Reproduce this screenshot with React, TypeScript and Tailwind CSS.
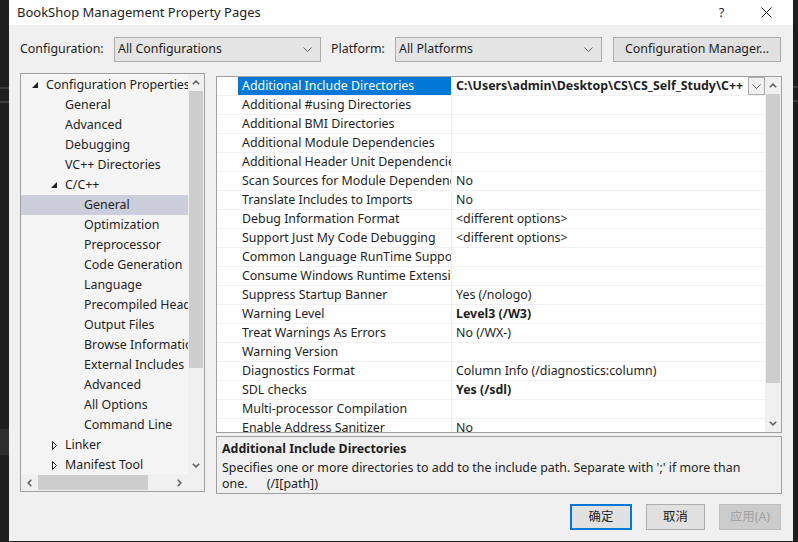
import React from 'react';

type Row = { name: string; value?: string; bold?: boolean };

const rows: Row[] = [
  { name: 'Additional Include Directories', value: 'C:\\Users\\admin\\Desktop\\CS\\CS_Self_Study\\C++', bold: true },
  { name: 'Additional #using Directories' },
  { name: 'Additional BMI Directories' },
  { name: 'Additional Module Dependencies' },
  { name: 'Additional Header Unit Dependencies' },
  { name: 'Scan Sources for Module Dependencies', value: 'No' },
  { name: 'Translate Includes to Imports', value: 'No' },
  { name: 'Debug Information Format', value: '<different options>' },
  { name: 'Support Just My Code Debugging', value: '<different options>' },
  { name: 'Common Language RunTime Support' },
  { name: 'Consume Windows Runtime Extension' },
  { name: 'Suppress Startup Banner', value: 'Yes (/nologo)' },
  { name: 'Warning Level', value: 'Level3 (/W3)', bold: true },
  { name: 'Treat Warnings As Errors', value: 'No (/WX-)' },
  { name: 'Warning Version' },
  { name: 'Diagnostics Format', value: 'Column Info (/diagnostics:column)' },
  { name: 'SDL checks', value: 'Yes (/sdl)', bold: true },
  { name: 'Multi-processor Compilation' },
  { name: 'Enable Address Sanitizer', value: 'No' },
];

type TreeItem = { label: string; level: number; toggle?: 'open' | 'closed'; selected?: boolean };

const tree: TreeItem[] = [
  { label: 'Configuration Properties', level: 0, toggle: 'open' },
  { label: 'General', level: 1 },
  { label: 'Advanced', level: 1 },
  { label: 'Debugging', level: 1 },
  { label: 'VC++ Directories', level: 1 },
  { label: 'C/C++', level: 1, toggle: 'open' },
  { label: 'General', level: 2, selected: true },
  { label: 'Optimization', level: 2 },
  { label: 'Preprocessor', level: 2 },
  { label: 'Code Generation', level: 2 },
  { label: 'Language', level: 2 },
  { label: 'Precompiled Headers', level: 2 },
  { label: 'Output Files', level: 2 },
  { label: 'Browse Information', level: 2 },
  { label: 'External Includes', level: 2 },
  { label: 'Advanced', level: 2 },
  { label: 'All Options', level: 2 },
  { label: 'Command Line', level: 2 },
  { label: 'Linker', level: 1, toggle: 'closed' },
  { label: 'Manifest Tool', level: 1, toggle: 'closed' },
];

function ChevronDown() {
  return (
    <svg width="9" height="5" viewBox="0 0 9 5">
      <path d="M0.5 0.5 L4.5 4.5 L8.5 0.5" fill="none" stroke="#606060" strokeWidth="1" />
    </svg>
  );
}

function ArrowUp() {
  return (
    <svg width="8" height="5" viewBox="0 0 8 5">
      <path d="M0.8 4.3 L4 1.2 L7.2 4.3" fill="none" stroke="#606060" strokeWidth="1.6" />
    </svg>
  );
}

function ArrowDown() {
  return (
    <svg width="8" height="5" viewBox="0 0 8 5">
      <path d="M0.8 0.7 L4 3.8 L7.2 0.7" fill="none" stroke="#606060" strokeWidth="1.6" />
    </svg>
  );
}

function ArrowLeft() {
  return (
    <svg width="5" height="8" viewBox="0 0 5 8">
      <path d="M4.3 0.8 L1.2 4 L4.3 7.2" fill="none" stroke="#606060" strokeWidth="1.6" />
    </svg>
  );
}

function ArrowRight() {
  return (
    <svg width="5" height="8" viewBox="0 0 5 8">
      <path d="M0.7 0.8 L3.8 4 L0.7 7.2" fill="none" stroke="#606060" strokeWidth="1.6" />
    </svg>
  );
}

function Toggle({ kind }: { kind: 'open' | 'closed' }) {
  if (kind === 'open') {
    return (
      <svg width="6" height="6" viewBox="0 0 6 6">
        <polygon points="6,0 6,6 0,6" fill="#1e1e1e" />
      </svg>
    );
  }
  return (
    <svg width="5" height="9" viewBox="0 0 5 9">
      <polygon points="0.5,0.5 4.5,4.5 0.5,8.5" fill="none" stroke="#1e1e1e" strokeWidth="1" />
    </svg>
  );
}

function Select({ label, width }: { label: string; width: string }) {
  return (
    <div className={`flex h-[25px] items-center justify-between border border-[#adadad] bg-[#e5e5e5] pl-[3px] pr-[8px] ${width}`}>
      <span>{label}</span>
      <ChevronDown />
    </div>
  );
}

function TreePanel() {
  return (
    <div className="flex h-[419px] w-[185px] flex-col border border-[#a0a0a0] bg-[#f5f5f5]">
      <div className="flex min-h-0 flex-1">
        <div className="flex-1 overflow-hidden pt-[1px]">
          {tree.map((t, i) => (
            <div
              key={i}
              className={`relative flex h-[20px] items-center whitespace-nowrap text-[#1e1e1e] ${t.selected ? 'bg-[#cccedb]' : ''}`}
            >
              <div
                className={`flex w-[16px] shrink-0 items-center justify-center ${
                  t.level === 0 ? 'ml-[6px]' : t.level === 1 ? 'ml-[25px]' : 'ml-[44px]'
                }`}
              >
                {t.toggle && <Toggle kind={t.toggle} />}
              </div>
              <span className="ml-[3px]">{t.label}</span>
            </div>
          ))}
        </div>
        <div className="flex w-[16px] shrink-0 flex-col bg-[#f0f0f0]">
          <div className="flex h-[17px] items-center justify-center">
            <ArrowUp />
          </div>
          <div className="flex-1 px-[1px]">
            <div className="h-[277px] bg-[#cdcdcd]" />
          </div>
          <div className="flex h-[17px] items-center justify-center">
            <ArrowDown />
          </div>
        </div>
      </div>
      <div className="flex h-[17px] shrink-0">
        <div className="flex flex-1 items-center bg-[#f0f0f0]">
          <div className="flex w-[17px] justify-center">
            <ArrowLeft />
          </div>
          <div className="h-[15px] w-[110px] bg-[#cdcdcd]" />
          <div className="flex-1" />
          <div className="flex w-[17px] justify-center">
            <ArrowRight />
          </div>
        </div>
        <div className="w-[16px] bg-[#f0f0f0]" />
      </div>
    </div>
  );
}

function PropertyGrid() {
  return (
    <div className="flex h-[357px] border border-[#a0a0a0] bg-white">
      <div className="flex-1 overflow-hidden">
        {rows.map((r, i) => {
          const selected = i === 0;
          return (
            <div key={i} className="flex h-[19px] border-b border-[#f0f0f5]">
              <div className="w-[21px] shrink-0 bg-white" />
              <div
                className={`w-[214px] shrink-0 overflow-hidden whitespace-nowrap border-r border-[#f0f0f5] pl-[4px] leading-[18px] ${
                  selected ? 'bg-[#0078d7] text-white' : 'text-[#1e1e1e]'
                }`}
              >
                {r.name}
              </div>
              <div className="relative min-w-0 flex-1 overflow-hidden whitespace-nowrap pl-[4px] leading-[18px] text-[#1e1e1e]">
                <span className={r.bold ? 'font-bold' : ''}>{r.value}</span>
                {selected && (
                  <div className="absolute right-0 top-0 flex h-[18px] w-[17px] items-center justify-center border border-[#adadad] bg-[#f0f0f0]">
                    <ChevronDown />
                  </div>
                )}
              </div>
            </div>
          );
        })}
      </div>
      <div className="flex w-[16px] shrink-0 flex-col bg-[#f0f0f0]">
        <div className="flex h-[17px] items-center justify-center">
          <ArrowUp />
        </div>
        <div className="flex-1 px-[1px]">
          <div className="h-[289px] bg-[#cdcdcd]" />
        </div>
        <div className="flex h-[17px] items-center justify-center">
          <ArrowDown />
        </div>
      </div>
    </div>
  );
}

export default function App() {
  return (
    <div className="flex h-[542px] w-[798px] overflow-hidden bg-[#1e1e1e] font-['Noto_Sans','Noto_Sans_CJK_SC',sans-serif] text-[12.4px] leading-none text-[#1e1e1e]">
      <div className="flex w-[9px] shrink-0 flex-col">
        <div className="mt-[87px] h-[2px] bg-[#3c3c3c]" />
        <div className="mt-[12px] h-[2px] bg-[#3c3c3c]" />
        <div className="mt-[326px] h-[26px] bg-[#2d2d2d]" />
      </div>
      <div className="flex h-[541px] w-[784px] shrink-0 flex-col bg-[#f0f0f0]">
        <div className="flex h-[25px] shrink-0 items-center bg-white">
          <span className="pl-[8px] text-[13px]">BookShop Management Property Pages</span>
          <div className="flex-1" />
          <div className="flex h-full w-[45px] items-center justify-center text-[13px]">?</div>
          <div className="flex h-full w-[45px] items-center justify-center">
            <svg width="11" height="11" viewBox="0 0 11 11">
              <path d="M0.5 0.5 L10.5 10.5 M10.5 0.5 L0.5 10.5" stroke="#1e1e1e" strokeWidth="1" />
            </svg>
          </div>
          <div className="w-[4px]" />
        </div>

        <div className="mt-[12px] flex h-[25px] shrink-0 items-center pl-[11px]">
          <span className="w-[94px]">Configuration:</span>
          <Select label="All Configurations" width="w-[207px]" />
          <span className="ml-[10px] w-[64px]">Platform:</span>
          <Select label="All Platforms" width="w-[207px]" />
          <div className="ml-[11px] flex h-[25px] w-[168px] items-center justify-center border border-[#adadad] bg-[#e1e1e1]">
            Configuration Manager...
          </div>
        </div>

        <div className="mt-[11px] flex shrink-0 pl-[11px]">
          <TreePanel />
          <div className="ml-[11px] flex w-[566px] flex-col">
            <div className="mt-[3px]">
              <PropertyGrid />
            </div>
            <div className="mt-[3px] flex h-[58px] flex-col border border-[#a0a0a0] bg-[#f0f0f0] px-[5px] pt-[4px]">
              <div className="h-[16px] font-bold leading-[16px]">Additional Include Directories</div>
              <div className="mt-[2px] whitespace-nowrap leading-[17px]">
                Specifies one or more directories to add to the include path. Separate with ';' if more than
              </div>
              <div className="whitespace-pre leading-[15px]">{'one.      (/I[path])'}</div>
            </div>
          </div>
        </div>

        <div className="mt-[10px] flex shrink-0 justify-end gap-[14px] pr-[12px]">
          <div className="flex h-[26px] w-[62px] items-center justify-center border-2 border-[#0078d7] bg-[#e1e1e1]">
            确定
          </div>
          <div className="flex h-[26px] w-[59px] items-center justify-center border border-[#adadad] bg-[#e1e1e1]">
            取消
          </div>
          <div className="flex h-[26px] w-[62px] items-center justify-center border border-[#bfbfbf] bg-[#cccccc] text-[#a0a0a0]">
            应用(A)
          </div>
        </div>
      </div>
      <div className="flex w-[5px] shrink-0 flex-col">
        <div className="mt-[86px] h-[2px] bg-[#3c3c3c]" />
        <div className="mt-[12px] h-[2px] bg-[#3c3c3c]" />
      </div>
    </div>
  );
}
